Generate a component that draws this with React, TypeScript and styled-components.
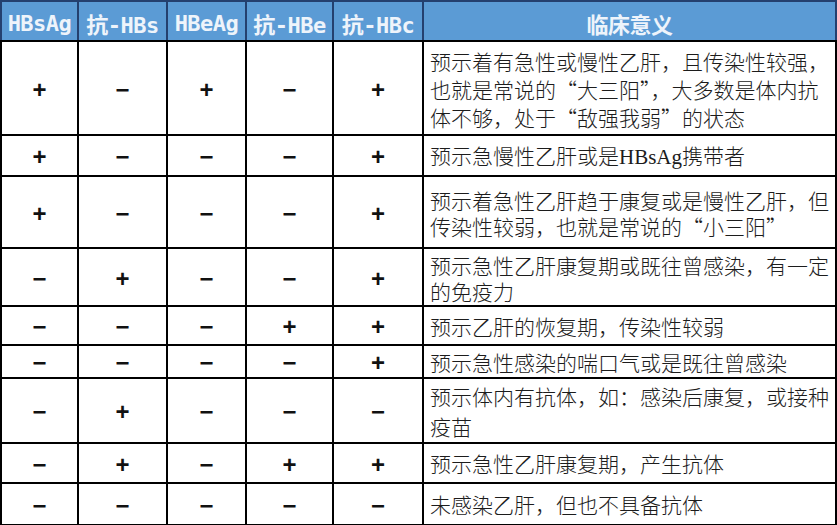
import styled, { createGlobalStyle } from "styled-components";

const GlobalStyle = createGlobalStyle`
  html, body {
    margin: 0;
    padding: 0;
    background: #ffffff;
  }
`;

type Sign = "+" | "-";

interface Row {
  signs: Sign[];
  lines: string[];
  height: number;
  lineHeight?: number;
}

const headers = ["HBsAg", "抗-HBs", "HBeAg", "抗-HBe", "抗-HBc"];
const colWidths = [77, 89, 79, 87, 90, 413];

const rows: Row[] = [
  {
    signs: ["+", "-", "+", "-", "+"],
    lines: [
      "预示着有急性或慢性乙肝，且传染性较强，",
      "也就是常说的“大三阳”，大多数是体内抗",
      "体不够，处于“敌强我弱”的状态",
    ],
    height: 94,
    lineHeight: 28,
  },
  {
    signs: ["+", "-", "-", "-", "+"],
    lines: ["预示急慢性乙肝或是HBsAg携带者"],
    height: 41,
  },
  {
    signs: ["+", "-", "-", "-", "+"],
    lines: ["预示着急性乙肝趋于康复或是慢性乙肝，但", "传染性较弱，也就是常说的“小三阳”"],
    height: 72,
    lineHeight: 26,
  },
  {
    signs: ["-", "+", "-", "-", "+"],
    lines: ["预示急性乙肝康复期或既往曾感染，有一定", "的免疫力"],
    height: 58,
    lineHeight: 26,
  },
  {
    signs: ["-", "-", "-", "+", "+"],
    lines: ["预示乙肝的恢复期，传染性较弱"],
    height: 39,
  },
  {
    signs: ["-", "-", "-", "-", "+"],
    lines: ["预示急性感染的喘口气或是既往曾感染"],
    height: 33,
  },
  {
    signs: ["-", "+", "-", "-", "-"],
    lines: ["预示体内有抗体，如：感染后康复，或接种", "疫苗"],
    height: 65,
    lineHeight: 30,
  },
  {
    signs: ["-", "+", "-", "+", "+"],
    lines: ["预示急性乙肝康复期，产生抗体"],
    height: 40,
  },
  {
    signs: ["-", "-", "-", "-", "-"],
    lines: ["未感染乙肝，但也不具备抗体"],
    height: 42,
  },
];

// latin runs inside the chinese text use a serif face, like the original sheet
function renderLine(text: string) {
  return text.split(/(HBsAg)/).map((part, i) =>
    part === "HBsAg" ? <Latin key={i}>{part}</Latin> : part
  );
}

export default function App() {
  return (
    <>
      <GlobalStyle />
      <Table>
        <colgroup>
          {colWidths.map((w, i) => (
            <col key={i} style={{ width: w }} />
          ))}
        </colgroup>
        <thead>
          <HeadRow>
            {headers.map((h) => (
              <HeadCell key={h}>{h}</HeadCell>
            ))}
            <HeadCell>临床意义</HeadCell>
          </HeadRow>
        </thead>
        <tbody>
          {rows.map((row, r) => (
            <BodyRow key={r} $h={row.height}>
              {row.signs.map((s, c) => (
                <SignCell key={c}>{s === "+" ? "+" : "−"}</SignCell>
              ))}
              <TextCell $lh={row.lineHeight ?? 27}>
                {row.lines.map((line, i) => (
                  <span key={i}>
                    {i > 0 && <br />}
                    {renderLine(line)}
                  </span>
                ))}
              </TextCell>
            </BodyRow>
          ))}
        </tbody>
      </Table>
    </>
  );
}

const Table = styled.table`
  border-collapse: collapse;
  table-layout: fixed;
  width: 837px;
  margin: 0;
`;

const HeadRow = styled.tr`
  height: 40px;
  background-color: #5b9bd5;
`;

const HeadCell = styled.th`
  padding: 4px 0 0;
  border: 2px solid #24406f;
  border-bottom: 2px solid #000;
  color: #eef4fb;
  font-family: "DejaVu Sans Mono", "Noto Sans CJK SC", monospace;
  font-size: 22px;
  font-weight: bold;
  letter-spacing: -0.5px;
  text-align: center;
  white-space: nowrap;
  overflow: hidden;
`;

const BodyRow = styled.tr<{ $h: number }>`
  height: ${(p) => p.$h}px;
`;

const SignCell = styled.td`
  padding: 3px 0 0;
  border: 2px solid #000;
  text-align: center;
  vertical-align: middle;
  font-family: "Liberation Sans", Arial, sans-serif;
  font-size: 24px;
  font-weight: bold;
  color: #111;
`;

const TextCell = styled.td<{ $lh: number }>`
  padding: 1px 4px 0 6px;
  border: 2px solid #000;
  vertical-align: middle;
  font-family: "Noto Sans CJK SC", sans-serif;
  font-size: 21px;
  font-weight: 300;
  line-height: ${(p) => p.$lh}px;
  color: #1c1c1c;
  white-space: nowrap;
`;

const Latin = styled.span`
  font-family: "Liberation Serif", "Times New Roman", serif;
`;
